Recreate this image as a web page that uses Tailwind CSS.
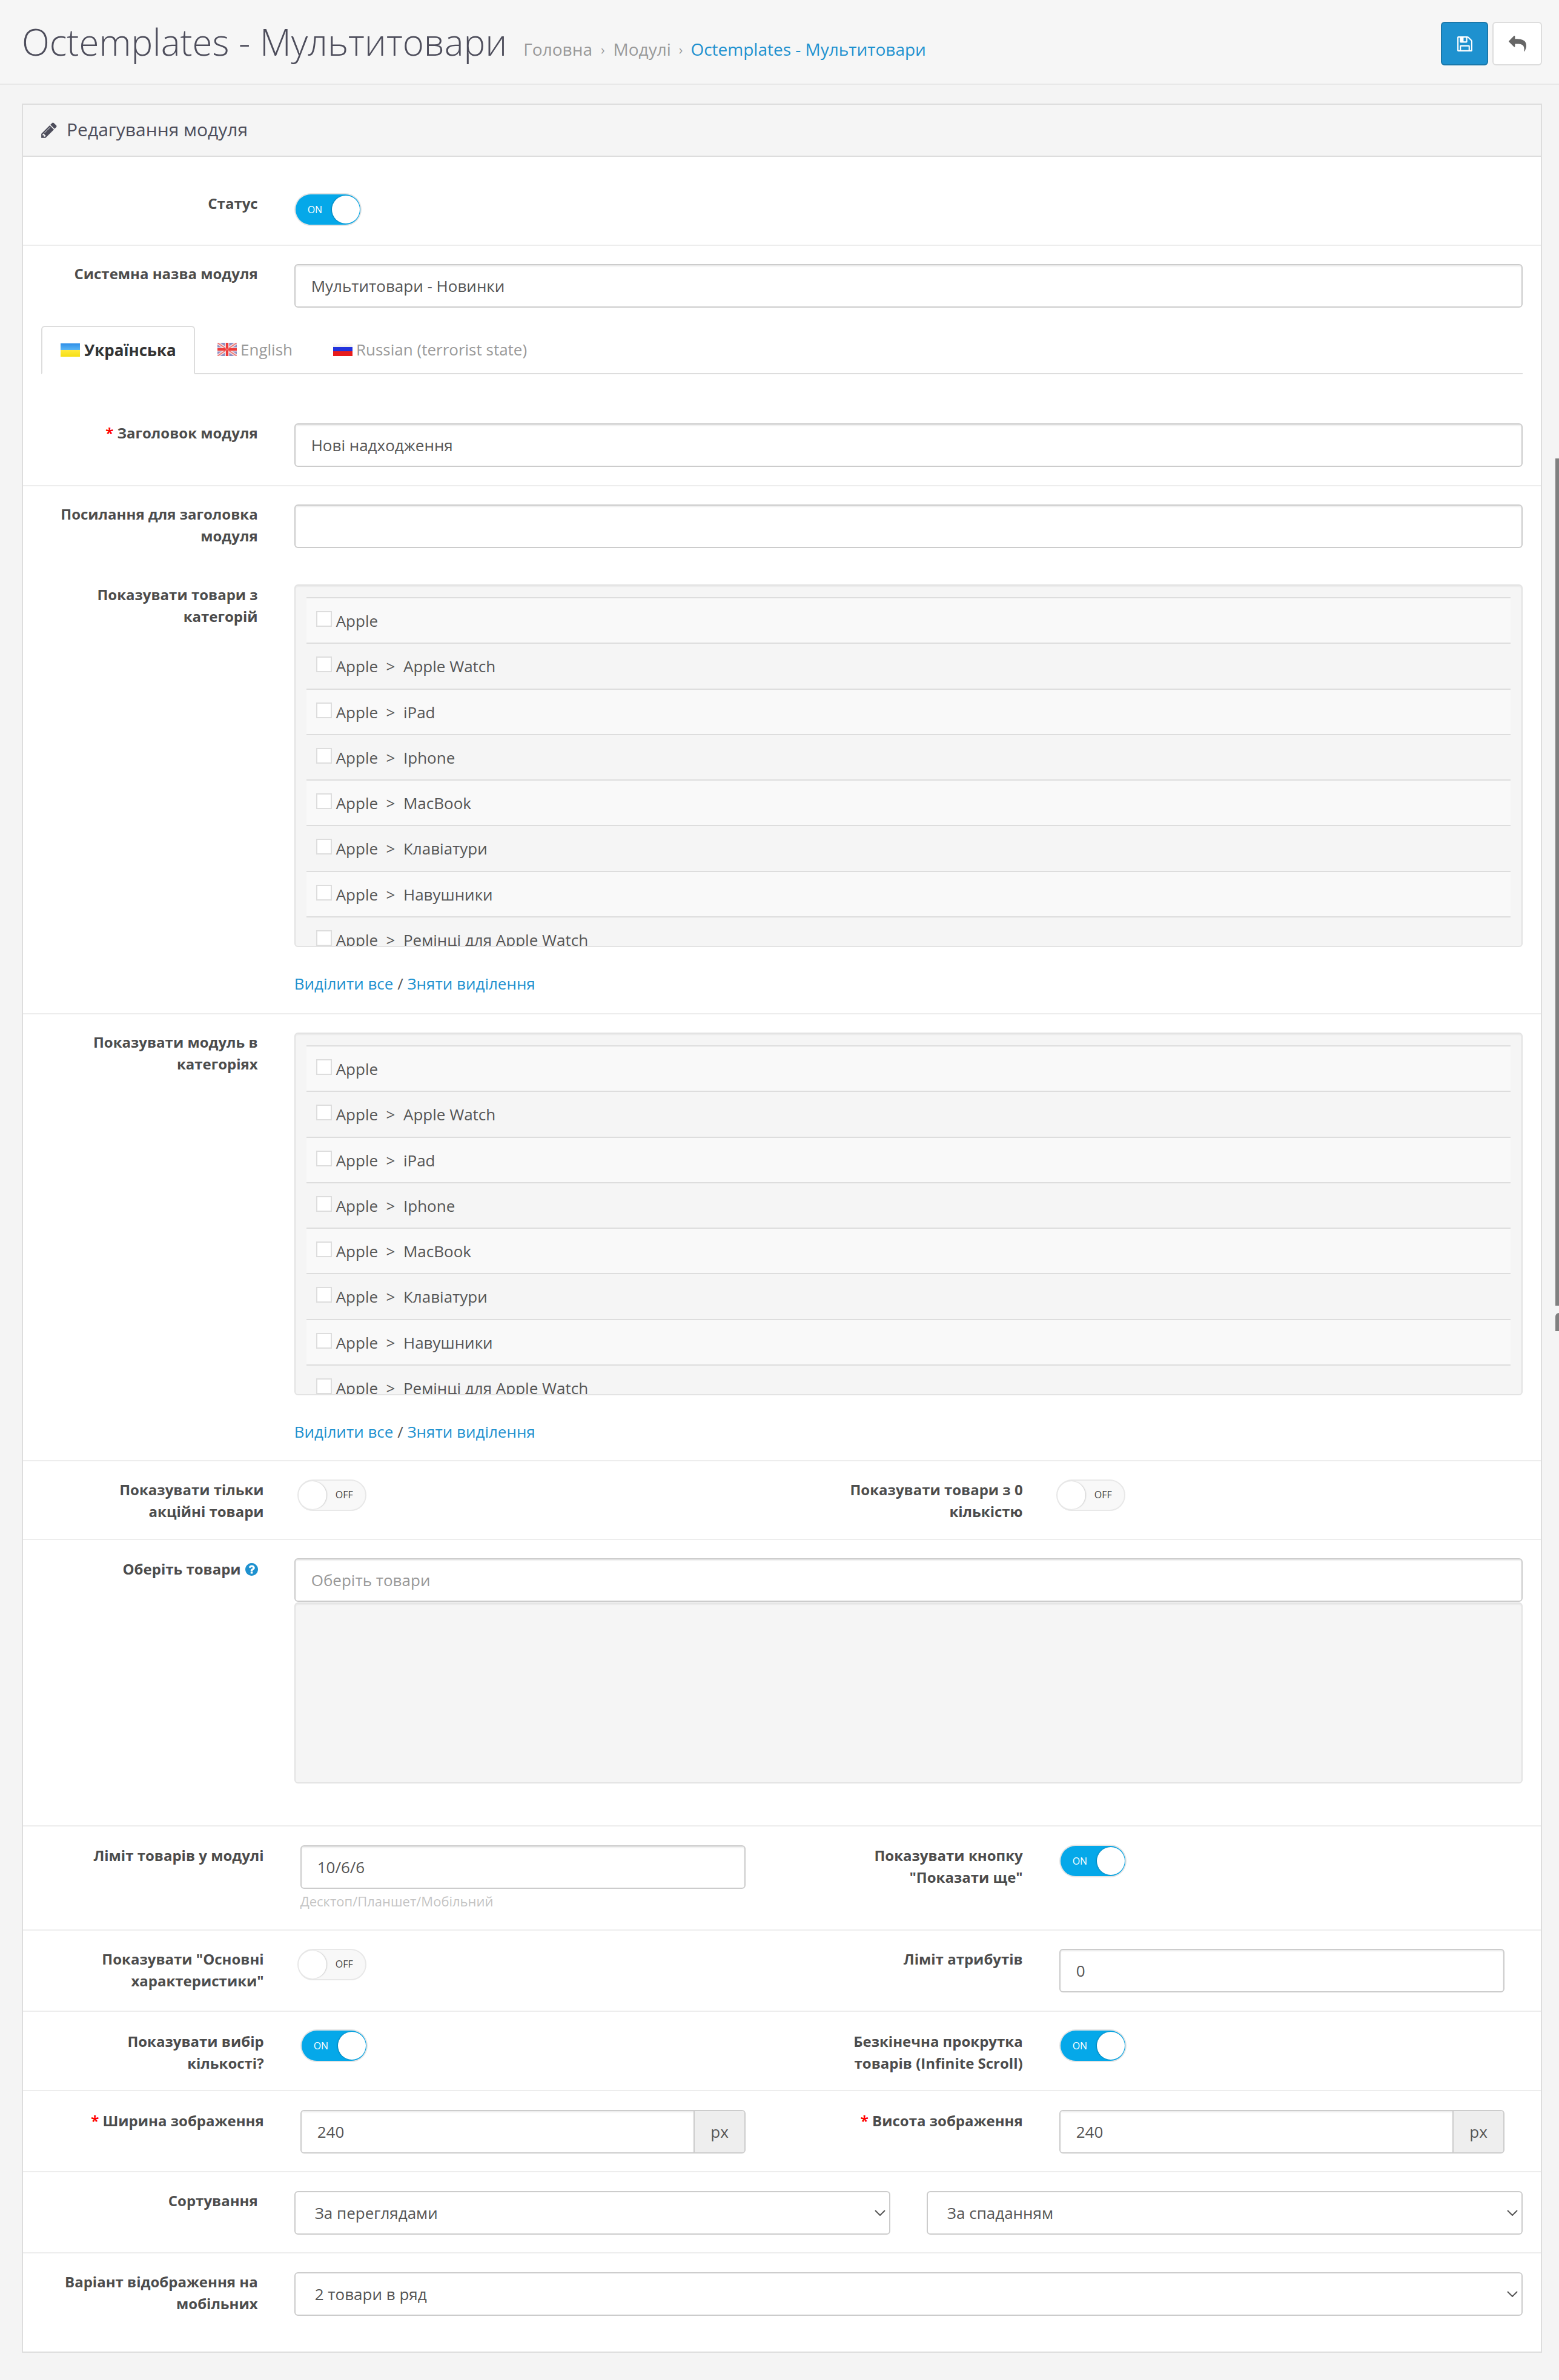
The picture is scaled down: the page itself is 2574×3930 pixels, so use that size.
<!DOCTYPE html>
<html lang="uk">
<head>
    <meta charset="UTF-8">
    <title>Octemplates - Мультитовари</title>
    <script src="https://cdn.jsdelivr.net/npm/@tailwindcss/browser@4"></script>
</head>
<body class="relative bg-[#f4f4f4] font-['Open_Sans',sans-serif] text-[26px] leading-[36px] text-[#555] h-[3930px] overflow-hidden">

    <!-- page header -->
    <div class="h-[140px] bg-[#f6f6f6] border-b-2 border-[#e8e8e8] flex items-start pl-[36px] pr-[28px]">
        <h1 class="text-[60px] font-light leading-[66px] text-[#4d4d5b] mt-[36px] whitespace-nowrap">Octemplates - Мультитовари</h1>
        <div class="flex items-center ml-[27px] mt-[63px] text-[28px] text-[#999] whitespace-nowrap">
            <span>Головна</span><span class="mx-[14px] text-[22px]">›</span>
            <span>Модулі</span><span class="mx-[13px] text-[22px]">›</span>
            <a class="text-[#1e91cf]">Octemplates - Мультитовари</a>
        </div>
        <div class="ml-auto flex gap-[7px] mt-[36px]">
            <button class="w-[78px] h-[72px] rounded-[6px] bg-[#1e91cf] border-2 border-[#1978ab] flex items-center justify-center">
                <svg class="w-[29px] h-[29px] fill-white" viewBox="0 0 1792 1792"><path d="M512 1536h768v-384h-768v384zm896 0h128v-896q0-14-10-38.500t-20-34.500l-281-281q-10-10-34-20t-39-10v416q0 40-28 68t-68 28h-576q-40 0-68-28t-28-68v-416h-128v1280h128v-416q0-40 28-68t68-28h832q40 0 68 28t28 68v416zm-384-928v-320q0-13-9.500-22.500t-22.500-9.500h-192q-13 0-22.500 9.500t-9.500 22.500v320q0 13 9.500 22.500t22.500 9.500h192q13 0 22.500-9.500t9.500-22.500zm640 32v928q0 40-28 68t-68 28h-1344q-40 0-68-28t-28-68v-1344q0-40 28-68t68-28h928q40 0 88 20t76 48l280 280q28 28 48 76t20 88z"/></svg>
            </button>
            <button class="w-[82px] h-[72px] rounded-[6px] bg-white border-2 border-[#ddd] flex items-center justify-center">
                <svg class="w-[29px] h-[29px] fill-[#666]" viewBox="0 0 1792 1792"><path d="M1792 1120q0 166-127 451-3 7-10.500 24t-13.500 30-13 22q-12 17-28 17-15 0-23.500-10t-8.500-25q0-9 2.500-26.500t2.500-23.500q5-68 5-123 0-101-17.500-181t-48.500-138.500-80-101-105.500-69.500-133-42.500-154-21.500-175.500-6h-224v256q0 26-19 45t-45 19-45-19l-512-512q-19-19-19-45t19-45l512-512q19-19 45-19t45 19 19 45v256h224q713 0 875 403 53 134 53 333z"/></svg>
            </button>
        </div>
    </div>

    <!-- panel -->
    <div class="mt-[31px] mx-[36px] w-[2510px] h-[3714px] border-2 border-[#ddd] bg-white">
        <div class="h-[84px] bg-[#f5f5f5] flex items-center pl-[28px] text-[30px] text-[#4d4d5b]">
            <svg class="w-[30px] h-[30px] fill-[#4d4d5b]" viewBox="0 0 1792 1792"><path d="M491 1536l91-91-235-235-91 91v107h128v128h107zm523-928q0-22-22-22-10 0-17 7l-542 542q-7 7-7 17 0 22 22 22 10 0 17-7l542-542q7-7 7-17zm-54-192l416 416-832 832h-416v-416zm683 96q0 53-37 90l-166 166-416-416 166-165q36-38 90-38 53 0 91 38l235 234q37 39 37 91z"/></svg>
            <span class="ml-[14px] -mt-[2px]">Редагування модуля</span>
        </div>

        <!-- status -->
        <div class="border-t-2 border-[#ddd] h-[149px] border-b-2 border-b-[#ededed] grid grid-cols-[417.67px_1fr] pt-[61px]">
            <div class="pr-[30px] -mt-[2px] text-right font-bold text-[24px] text-[#4c4c4c]">Статус</div>
            <div class="pl-[32px]">
                <div class="relative w-[107px] h-[50px] mt-[1px] rounded-full bg-[#05a8e9] shadow-[0_0_0_2px_#e4e4e4]">
                    <span class="absolute left-[20px] top-[7px] text-[16px] text-white">ON</span>
                    <span class="absolute right-[1px] top-[2px] w-[46px] h-[46px] rounded-full bg-white shadow-[-1px_0_2px_rgba(0,0,0,.25)]"></span>
                </div>
            </div>
        </div>

        <!-- system name -->
        <div class="grid grid-cols-[417.67px_1fr] pt-[30px]">
            <div class="pr-[30px] -mt-[2px] text-right font-bold text-[24px] text-[#4c4c4c]">Системна назва модуля</div>
            <div class="px-[30px]">
                <input class="w-full h-[72px] px-[26px] border-2 border-[#ccc] rounded-[6px] bg-white text-[#555] shadow-[inset_0_2px_2px_rgba(0,0,0,.075)]" value="Мультитовари - Новинки">
            </div>
        </div>

        <!-- language tabs -->
        <div class="mx-[30px] mt-[30px] h-[80px] border-b-2 border-[#ddd] flex">
            <div class="w-[254px] h-[80px] border-2 border-[#ddd] border-b-white rounded-t-[6px] bg-white flex items-center pl-[30px] font-bold text-[#333]">
                <span class="w-[32px] h-[22px] mr-[7px] bg-[linear-gradient(#2f8fe8_0%,#58b4f4_48%,#ffe93a_52%,#f5de14_100%)]"></span>Українська
            </div>
            <div class="flex items-center pl-[37px] text-[#999]">
                <svg class="w-[32px] h-[22px] mr-[6px]" viewBox="0 0 32 22"><rect width="32" height="22" fill="#8f8fc4"/><path d="M0 0L32 22M32 0L0 22" stroke="#f3dcdc" stroke-width="5"/><path d="M16 0V22M0 11H32" stroke="#f3dcdc" stroke-width="7"/><path d="M16 0V22M0 11H32" stroke="#ee3a3a" stroke-width="4"/><path d="M0 0L32 22M32 0L0 22" stroke="#ee7070" stroke-width="1.500"/></svg>English
            </div>
            <div class="flex items-center pl-[67px] text-[#999]">
                <span class="w-[32px] h-[22px] mr-[6px] bg-[linear-gradient(#fff_0%,#eee_30%,#2233dd_34%,#2233dd_62%,#e81c1c_66%,#e81c1c_100%)]"></span>Russian (terrorist state)
            </div>
        </div>

        <!-- title -->
        <div class="h-[185px] border-b-2 border-[#ededed] grid grid-cols-[417.67px_1fr] pt-[81px]">
            <div class="pr-[30px] -mt-[2px] text-right font-bold text-[24px] text-[#4c4c4c]"><span class="text-[#f00]">*</span> Заголовок модуля</div>
            <div class="px-[30px]">
                <input class="w-full h-[72px] px-[26px] border-2 border-[#ccc] rounded-[6px] bg-white text-[#555] shadow-[inset_0_2px_2px_rgba(0,0,0,.075)]" value="Нові надходження">
            </div>
        </div>

        <!-- title link + show products from categories -->
        <div class="h-[872px] border-b-2 border-[#ededed] grid grid-cols-[417.67px_1fr] grid-rows-[132px_1fr] pt-[30px]">
            <div class="pr-[30px] -mt-[2px] text-right font-bold text-[24px] text-[#4c4c4c]">Посилання для заголовка модуля</div>
            <div class="px-[30px]">
                <input class="w-full h-[72px] px-[26px] border-2 border-[#ccc] rounded-[6px] bg-white shadow-[inset_0_2px_2px_rgba(0,0,0,.075)]">
            </div>
            <div class="pr-[30px] -mt-[1px] text-right font-bold text-[24px] text-[#4c4c4c]">Показувати товари з категорій</div>
            <div class="px-[30px]">
                <div class="h-[599px] overflow-hidden rounded-[6px] border-2 border-[#e3e3e3] bg-[#f5f5f5] px-[18px] pt-[19px] shadow-[inset_0_2px_2px_rgba(0,0,0,.05)]">
                    <div class="h-[75.25px] border-t-2 border-[#ddd] bg-[#f9f9f9] flex items-start pt-[21px] pl-[16px]"><input type="checkbox" class="appearance-none w-[26px] h-[26px] border-2 border-[#ddd] bg-white mr-[7px]"><span class="-mt-[2px]">Apple</span></div>
                    <div class="h-[75.25px] border-t-2 border-[#ddd] flex items-start pt-[21px] pl-[16px]"><input type="checkbox" class="appearance-none w-[26px] h-[26px] border-2 border-[#ddd] bg-white mr-[7px]"><span class="-mt-[2px]">Apple&nbsp;&nbsp;&gt;&nbsp;&nbsp;Apple Watch</span></div>
                    <div class="h-[75.25px] border-t-2 border-[#ddd] bg-[#f9f9f9] flex items-start pt-[21px] pl-[16px]"><input type="checkbox" class="appearance-none w-[26px] h-[26px] border-2 border-[#ddd] bg-white mr-[7px]"><span class="-mt-[2px]">Apple&nbsp;&nbsp;&gt;&nbsp;&nbsp;iPad</span></div>
                    <div class="h-[75.25px] border-t-2 border-[#ddd] flex items-start pt-[21px] pl-[16px]"><input type="checkbox" class="appearance-none w-[26px] h-[26px] border-2 border-[#ddd] bg-white mr-[7px]"><span class="-mt-[2px]">Apple&nbsp;&nbsp;&gt;&nbsp;&nbsp;Iphone</span></div>
                    <div class="h-[75.25px] border-t-2 border-[#ddd] bg-[#f9f9f9] flex items-start pt-[21px] pl-[16px]"><input type="checkbox" class="appearance-none w-[26px] h-[26px] border-2 border-[#ddd] bg-white mr-[7px]"><span class="-mt-[2px]">Apple&nbsp;&nbsp;&gt;&nbsp;&nbsp;MacBook</span></div>
                    <div class="h-[75.25px] border-t-2 border-[#ddd] flex items-start pt-[21px] pl-[16px]"><input type="checkbox" class="appearance-none w-[26px] h-[26px] border-2 border-[#ddd] bg-white mr-[7px]"><span class="-mt-[2px]">Apple&nbsp;&nbsp;&gt;&nbsp;&nbsp;Клавіатури</span></div>
                    <div class="h-[75.25px] border-t-2 border-[#ddd] bg-[#f9f9f9] flex items-start pt-[21px] pl-[16px]"><input type="checkbox" class="appearance-none w-[26px] h-[26px] border-2 border-[#ddd] bg-white mr-[7px]"><span class="-mt-[2px]">Apple&nbsp;&nbsp;&gt;&nbsp;&nbsp;Навушники</span></div>
                    <div class="h-[75.25px] border-t-2 border-[#ddd] flex items-start pt-[21px] pl-[16px]"><input type="checkbox" class="appearance-none w-[26px] h-[26px] border-2 border-[#ddd] bg-white mr-[7px]"><span class="-mt-[2px]">Apple&nbsp;&nbsp;&gt;&nbsp;&nbsp;Ремінці для Apple Watch</span></div>
                </div>
                <div class="mt-[42px]"><a class="text-[#1e91cf]">Виділити все</a> / <a class="text-[#1e91cf]">Зняти виділення</a></div>
            </div>
        </div>

        <!-- show module in categories -->
        <div class="h-[738px] border-b-2 border-[#ededed] grid grid-cols-[417.67px_1fr] pt-[30px]">
            <div class="pr-[30px] -mt-[2px] text-right font-bold text-[24px] text-[#4c4c4c]">Показувати модуль в категоріях</div>
            <div class="px-[30px]">
                <div class="h-[599px] overflow-hidden rounded-[6px] border-2 border-[#e3e3e3] bg-[#f5f5f5] px-[18px] pt-[19px] shadow-[inset_0_2px_2px_rgba(0,0,0,.05)]">
                    <div class="h-[75.25px] border-t-2 border-[#ddd] bg-[#f9f9f9] flex items-start pt-[21px] pl-[16px]"><input type="checkbox" class="appearance-none w-[26px] h-[26px] border-2 border-[#ddd] bg-white mr-[7px]"><span class="-mt-[2px]">Apple</span></div>
                    <div class="h-[75.25px] border-t-2 border-[#ddd] flex items-start pt-[21px] pl-[16px]"><input type="checkbox" class="appearance-none w-[26px] h-[26px] border-2 border-[#ddd] bg-white mr-[7px]"><span class="-mt-[2px]">Apple&nbsp;&nbsp;&gt;&nbsp;&nbsp;Apple Watch</span></div>
                    <div class="h-[75.25px] border-t-2 border-[#ddd] bg-[#f9f9f9] flex items-start pt-[21px] pl-[16px]"><input type="checkbox" class="appearance-none w-[26px] h-[26px] border-2 border-[#ddd] bg-white mr-[7px]"><span class="-mt-[2px]">Apple&nbsp;&nbsp;&gt;&nbsp;&nbsp;iPad</span></div>
                    <div class="h-[75.25px] border-t-2 border-[#ddd] flex items-start pt-[21px] pl-[16px]"><input type="checkbox" class="appearance-none w-[26px] h-[26px] border-2 border-[#ddd] bg-white mr-[7px]"><span class="-mt-[2px]">Apple&nbsp;&nbsp;&gt;&nbsp;&nbsp;Iphone</span></div>
                    <div class="h-[75.25px] border-t-2 border-[#ddd] bg-[#f9f9f9] flex items-start pt-[21px] pl-[16px]"><input type="checkbox" class="appearance-none w-[26px] h-[26px] border-2 border-[#ddd] bg-white mr-[7px]"><span class="-mt-[2px]">Apple&nbsp;&nbsp;&gt;&nbsp;&nbsp;MacBook</span></div>
                    <div class="h-[75.25px] border-t-2 border-[#ddd] flex items-start pt-[21px] pl-[16px]"><input type="checkbox" class="appearance-none w-[26px] h-[26px] border-2 border-[#ddd] bg-white mr-[7px]"><span class="-mt-[2px]">Apple&nbsp;&nbsp;&gt;&nbsp;&nbsp;Клавіатури</span></div>
                    <div class="h-[75.25px] border-t-2 border-[#ddd] bg-[#f9f9f9] flex items-start pt-[21px] pl-[16px]"><input type="checkbox" class="appearance-none w-[26px] h-[26px] border-2 border-[#ddd] bg-white mr-[7px]"><span class="-mt-[2px]">Apple&nbsp;&nbsp;&gt;&nbsp;&nbsp;Навушники</span></div>
                    <div class="h-[75.25px] border-t-2 border-[#ddd] flex items-start pt-[21px] pl-[16px]"><input type="checkbox" class="appearance-none w-[26px] h-[26px] border-2 border-[#ddd] bg-white mr-[7px]"><span class="-mt-[2px]">Apple&nbsp;&nbsp;&gt;&nbsp;&nbsp;Ремінці для Apple Watch</span></div>
                </div>
                <div class="mt-[42px]"><a class="text-[#1e91cf]">Виділити все</a> / <a class="text-[#1e91cf]">Зняти виділення</a></div>
            </div>
        </div>

        <!-- specials / zero qty -->
        <div class="h-[130px] border-b-2 border-[#ededed] grid grid-cols-2 gap-x-[60px] px-[30px] pt-[29px]">
            <div class="grid grid-cols-[397.67px_1fr]">
                <div class="pl-[30px] pr-[30px] text-right font-bold text-[24px] text-[#4c4c4c]">Показувати тільки акційні товари</div>
                <div class="pl-[25px]">
                    <div class="relative w-[114px] h-[52px] mt-[1px] rounded-full bg-[#f8f8f8] border-2 border-[#e8e8e8]">
                        <span class="absolute left-[0px] top-[1px] w-[46px] h-[46px] rounded-full bg-white shadow-[1px_0_2px_rgba(0,0,0,.2)]"></span>
                        <span class="absolute right-[20px] top-[5px] text-[16px] text-[#444]">OFF</span>
                    </div>
                </div>
            </div>
            <div class="grid grid-cols-[397.67px_1fr]">
                <div class="pl-[30px] pr-[30px] text-right font-bold text-[24px] text-[#4c4c4c]">Показувати товари з 0 кількістю</div>
                <div class="pl-[25px]">
                    <div class="relative w-[114px] h-[52px] mt-[1px] rounded-full bg-[#f8f8f8] border-2 border-[#e8e8e8]">
                        <span class="absolute left-[0px] top-[1px] w-[46px] h-[46px] rounded-full bg-white shadow-[1px_0_2px_rgba(0,0,0,.2)]"></span>
                        <span class="absolute right-[20px] top-[5px] text-[16px] text-[#444]">OFF</span>
                    </div>
                </div>
            </div>
        </div>

        <!-- choose products -->
        <div class="h-[473px] border-b-2 border-[#ededed] grid grid-cols-[417.67px_1fr] pt-[30px]">
            <div class="pr-[30px] font-bold text-[24px] text-[#4c4c4c] flex justify-end h-[36px]">Оберіть товари
                <svg class="w-[21px] h-[21px] ml-[7px] mt-[8px] fill-[#1e91cf]" viewBox="128 128 1536 1536"><path d="M1024 1376v-192q0-14-9-23t-23-9h-192q-14 0-23 9t-9 23v192q0 14 9 23t23 9h192q14 0 23-9t9-23zm256-672q0-88-55.500-163t-138.500-116-170-41q-243 0-371 213-15 24 8 42l132 100q7 6 19 6 16 0 25-12 53-68 86-92 34-24 86-24 48 0 85.500 26t37.500 59q0 38-20 61t-68 45q-63 28-115.500 86.500t-52.500 125.500v36q0 14 9 23t23 9h192q14 0 23-9t9-23q0-19 21.500-49.500t54.500-49.500q32-18 49-28.500t46-35 44.500-48 28-60.500 12.500-81zm384 192q0 209-103 385.500t-279.500 279.500-385.500 103-385.500-103-279.500-279.500-103-385.500 103-385.500 279.500-279.500 385.500-103 385.500 103 279.500 279.500 103 385.500z"/></svg>
            </div>
            <div class="px-[30px]">
                <input class="w-full h-[72px] px-[26px] border-2 border-[#ccc] rounded-[6px] bg-white placeholder:text-[#999] shadow-[inset_0_2px_2px_rgba(0,0,0,.075)]" placeholder="Оберіть товари">
                <div class="h-[299px] mt-[1px] rounded-[6px] border-2 border-[#e3e3e3] bg-[#f5f5f5] shadow-[inset_0_2px_2px_rgba(0,0,0,.05)]"></div>
            </div>
        </div>

        <!-- limit -->
        <div class="h-[172px] border-b-2 border-[#ededed] grid grid-cols-2 gap-x-[60px] px-[30px] pt-[30px]">
            <div class="grid grid-cols-[397.67px_1fr]">
                <div class="pl-[30px] pr-[30px] text-right font-bold text-[24px] text-[#4c4c4c]">Ліміт товарів у модулі</div>
                <div class="px-[30px] pt-[1px]">
                    <input class="w-full h-[72px] px-[26px] border-2 border-[#ccc] rounded-[6px] bg-white text-[#555] shadow-[inset_0_2px_2px_rgba(0,0,0,.075)]" value="10/6/6">
                    <div class="text-[22px] leading-[30px] text-[#c4c4c4] mt-[5px]">Десктоп/Планшет/Мобільний</div>
                </div>
            </div>
            <div class="grid grid-cols-[397.67px_1fr]">
                <div class="pl-[30px] pr-[30px] text-right font-bold text-[24px] text-[#4c4c4c]">Показувати кнопку "Показати ще"</div>
                <div class="pl-[32px] pt-[2px]">
                    <div class="relative w-[107px] h-[50px] rounded-full bg-[#05a8e9] shadow-[0_0_0_2px_#e4e4e4]">
                        <span class="absolute left-[20px] top-[7px] text-[16px] text-white">ON</span>
                        <span class="absolute right-[1px] top-[2px] w-[46px] h-[46px] rounded-full bg-white shadow-[-1px_0_2px_rgba(0,0,0,.25)]"></span>
                    </div>
                </div>
            </div>
        </div>

        <!-- main attributes / attribute limit -->
        <div class="h-[134px] border-b-2 border-[#ededed] grid grid-cols-2 gap-x-[60px] px-[30px] pt-[29px]">
            <div class="grid grid-cols-[397.67px_1fr]">
                <div class="pl-[30px] pr-[30px] text-right font-bold text-[24px] text-[#4c4c4c]">Показувати "Основні характеристики"</div>
                <div class="pl-[25px]">
                    <div class="relative w-[114px] h-[52px] mt-[1px] rounded-full bg-[#f8f8f8] border-2 border-[#e8e8e8]">
                        <span class="absolute left-[0px] top-[1px] w-[46px] h-[46px] rounded-full bg-white shadow-[1px_0_2px_rgba(0,0,0,.2)]"></span>
                        <span class="absolute right-[20px] top-[5px] text-[16px] text-[#444]">OFF</span>
                    </div>
                </div>
            </div>
            <div class="grid grid-cols-[397.67px_1fr]">
                <div class="pl-[30px] pr-[30px] text-right font-bold text-[24px] text-[#4c4c4c]">Ліміт атрибутів</div>
                <div class="px-[30px] pt-[1px]">
                    <input class="w-full h-[72px] px-[26px] border-2 border-[#ccc] rounded-[6px] bg-white text-[#555] shadow-[inset_0_2px_2px_rgba(0,0,0,.075)]" value="0">
                </div>
            </div>
        </div>

        <!-- quantity / infinite scroll -->
        <div class="h-[131px] border-b-2 border-[#ededed] grid grid-cols-2 gap-x-[60px] px-[30px] pt-[31px]">
            <div class="grid grid-cols-[397.67px_1fr]">
                <div class="pl-[30px] pr-[30px] text-right font-bold text-[24px] text-[#4c4c4c]">Показувати вибір кількості?</div>
                <div class="pl-[32px]">
                    <div class="relative w-[107px] h-[50px] rounded-full bg-[#05a8e9] shadow-[0_0_0_2px_#e4e4e4]">
                        <span class="absolute left-[20px] top-[7px] text-[16px] text-white">ON</span>
                        <span class="absolute right-[1px] top-[2px] w-[46px] h-[46px] rounded-full bg-white shadow-[-1px_0_2px_rgba(0,0,0,.25)]"></span>
                    </div>
                </div>
            </div>
            <div class="grid grid-cols-[397.67px_1fr]">
                <div class="pl-[30px] pr-[30px] text-right font-bold text-[24px] text-[#4c4c4c]">Безкінечна прокрутка товарів (Infinite Scroll)</div>
                <div class="pl-[32px]">
                    <div class="relative w-[107px] h-[50px] rounded-full bg-[#05a8e9] shadow-[0_0_0_2px_#e4e4e4]">
                        <span class="absolute left-[20px] top-[7px] text-[16px] text-white">ON</span>
                        <span class="absolute right-[1px] top-[2px] w-[46px] h-[46px] rounded-full bg-white shadow-[-1px_0_2px_rgba(0,0,0,.25)]"></span>
                    </div>
                </div>
            </div>
        </div>

        <!-- image size -->
        <div class="h-[134px] border-b-2 border-[#ededed] grid grid-cols-2 gap-x-[60px] px-[30px] pt-[31px]">
            <div class="grid grid-cols-[397.67px_1fr]">
                <div class="pl-[30px] pr-[30px] text-right font-bold text-[24px] text-[#4c4c4c]"><span class="text-[#f00]">*</span> Ширина зображення</div>
                <div class="px-[30px]">
                    <div class="flex h-[72px] border-2 border-[#ccc] rounded-[6px] overflow-hidden">
                        <input class="flex-1 min-w-0 px-[26px] bg-white text-[#555] shadow-[inset_0_2px_2px_rgba(0,0,0,.075)]" value="240">
                        <span class="w-[84px] bg-[#eee] border-l-2 border-[#ccc] flex items-center justify-center">px</span>
                    </div>
                </div>
            </div>
            <div class="grid grid-cols-[397.67px_1fr]">
                <div class="pl-[30px] pr-[30px] text-right font-bold text-[24px] text-[#4c4c4c]"><span class="text-[#f00]">*</span> Висота зображення</div>
                <div class="px-[30px]">
                    <div class="flex h-[72px] border-2 border-[#ccc] rounded-[6px] overflow-hidden">
                        <input class="flex-1 min-w-0 px-[26px] bg-white text-[#555] shadow-[inset_0_2px_2px_rgba(0,0,0,.075)]" value="240">
                        <span class="w-[84px] bg-[#eee] border-l-2 border-[#ccc] flex items-center justify-center">px</span>
                    </div>
                </div>
            </div>
        </div>

        <!-- sorting -->
        <div class="h-[134px] border-b-2 border-[#ededed] grid grid-cols-[417.67px_1fr] pt-[31px]">
            <div class="pr-[30px] -mt-[2px] text-right font-bold text-[24px] text-[#4c4c4c]">Сортування</div>
            <div class="px-[30px] grid grid-cols-2 gap-x-[60px]">
                <div class="relative h-[72px]">
                    <select class="appearance-none w-full h-full px-[32px] border-2 border-[#ccc] rounded-[6px] bg-white text-[#555]"><option>За переглядами</option></select>
                    <svg class="absolute right-[8px] top-[31px] w-[18px] h-[10px] fill-none stroke-[#555] stroke-2" viewBox="0 0 18 10"><path d="M1 1l8 8 8-8"/></svg>
                </div>
                <div class="relative h-[72px]">
                    <select class="appearance-none w-full h-full px-[32px] border-2 border-[#ccc] rounded-[6px] bg-white text-[#555]"><option>За спаданням</option></select>
                    <svg class="absolute right-[8px] top-[31px] w-[18px] h-[10px] fill-none stroke-[#555] stroke-2" viewBox="0 0 18 10"><path d="M1 1l8 8 8-8"/></svg>
                </div>
            </div>
        </div>

        <!-- mobile view -->
        <div class="grid grid-cols-[417.67px_1fr] pt-[31px]">
            <div class="pr-[30px] -mt-[2px] text-right font-bold text-[24px] text-[#4c4c4c]">Варіант відображення на мобільних</div>
            <div class="px-[30px]">
                <div class="relative h-[72px]">
                    <select class="appearance-none w-full h-full px-[32px] border-2 border-[#ccc] rounded-[6px] bg-white text-[#555]"><option>2 товари в ряд</option></select>
                    <svg class="absolute right-[8px] top-[31px] w-[18px] h-[10px] fill-none stroke-[#555] stroke-2" viewBox="0 0 18 10"><path d="M1 1l8 8 8-8"/></svg>
                </div>
            </div>
        </div>
    </div>

    <!-- overlay scrollbar of the browser -->
    <div class="absolute right-0 top-[757px] w-[6px] h-[1399px] bg-[#808080]"></div>
    <div class="absolute right-0 top-[2168px] w-[6px] h-[30px] rounded-tl-[6px] bg-[#808080]"></div>
</body>
</html>
